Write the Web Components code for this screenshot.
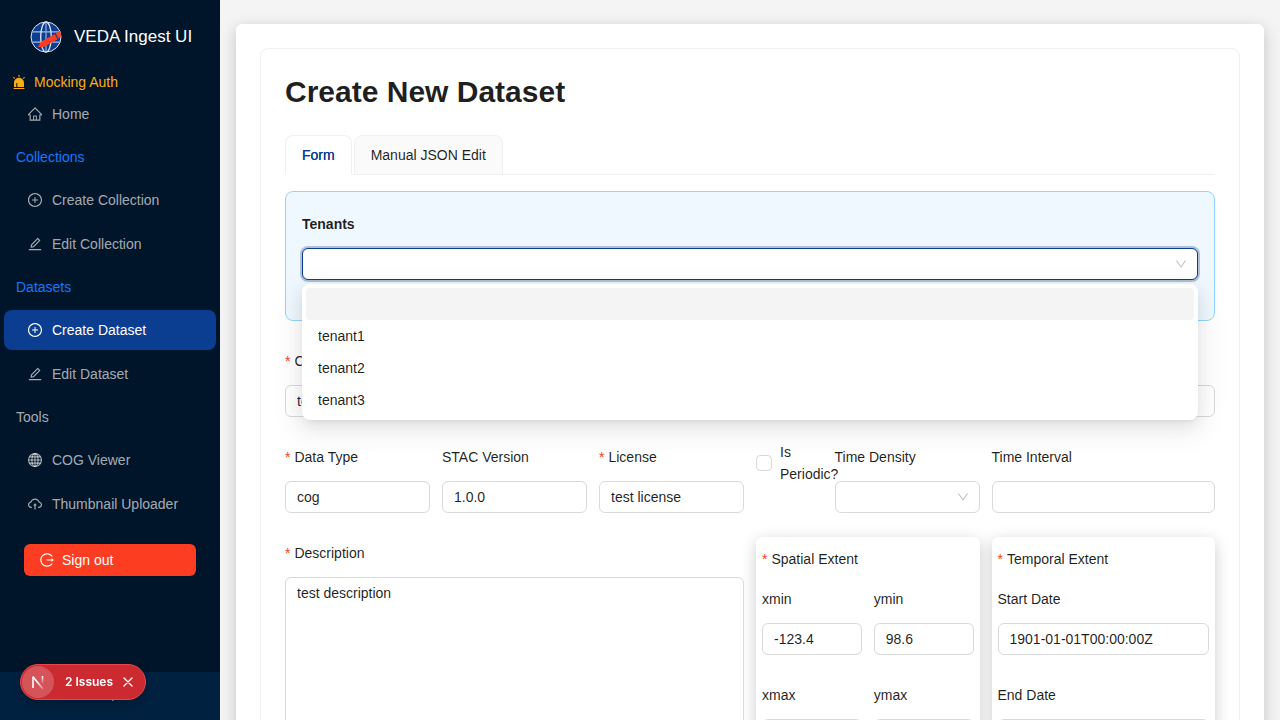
<!DOCTYPE html>
<html lang="en">
<head>
<meta charset="utf-8">
<title>VEDA Ingest UI</title>
<style>
  html { scrollbar-width: none; }
  body { margin: 0; background: #f4f4f4; color: rgba(0, 0, 0, 0.88); font: 14px/22px "Liberation Sans", Arial, sans-serif; }
</style>
</head>
<body>
<veda-app></veda-app>

<script>
const ICONS = {
  home: '<path d="M946.5 505L560.1 118.8l-25.9-25.9a31.5 31.5 0 00-44.4 0L77.5 505a63.9 63.9 0 00-18.8 46c.4 35.2 29.7 63.3 64.9 63.3h42.5V940h691.8V614.3h43.4c17.1 0 33.2-6.7 45.3-18.8a63.6 63.6 0 0018.7-45.3c0-17-6.7-33.1-18.8-45.2zM568 868H456V664h112v204zm217.9-325.7V868H632V640c0-22.1-17.9-40-40-40H432c-22.1 0-40 17.9-40 40v228H238.1V542.3h-96l370-369.7 23.1 23.1L882 542.3h-96.1z"/>',
  plus: '<path d="M696 480H544V328c0-4.400-3.600-8-8-8h-48c-4.400 0-8 3.600-8 8v152H328c-4.400 0-8 3.600-8 8v48c0 4.400 3.600 8 8 8h152v152c0 4.400 3.600 8 8 8h48c4.400 0 8-3.600 8-8V544h152c4.400 0 8-3.600 8-8v-48c0-4.400-3.600-8-8-8z"/><path d="M512 64C264.600 64 64 264.600 64 512s200.600 448 448 448 448-200.600 448-448S759.400 64 512 64zm0 820c-205.400 0-372-166.600-372-372s166.600-372 372-372 372 166.600 372 372-166.600 372-372 372z"/>',
  edit: '<path d="M257.7 752c2 0 4-.2 6-.5L431.9 722c2-.4 3.900-1.300 5.300-2.800l423.900-423.900a9.960 9.960 0 000-14.100L694.900 114.900c-1.900-1.900-4.400-2.900-7.100-2.900s-5.200 1-7.100 2.900L256.800 538.800c-1.500 1.500-2.400 3.300-2.800 5.300l-29.500 168.200a33.500 33.500 0 009.400 29.800c6.600 6.400 14.900 9.900 23.800 9.900zm67.400-174.400L687.800 215l73.300 73.300-362.700 362.600-88.900 15.700 15.600-89zM880 836H144c-17.700 0-32 14.300-32 32v36c0 4.400 3.600 8 8 8h784c4.400 0 8-3.600 8-8v-36c0-17.700-14.300-32-32-32z"/>',
  globe: '<g fill="none" stroke="currentColor" stroke-width="72"><circle cx="512" cy="512" r="412"/><ellipse cx="512" cy="512" rx="200" ry="412"/><path d="M512 100v824M100 512h824M165 310h694M165 714h694"/></g>',
  upload: '<path d="M518.3 459a8 8 0 00-12.600 0l-112 141.700a7.980 7.980 0 006.300 12.900h73.900V856c0 4.400 3.600 8 8 8h60c4.400 0 8-3.600 8-8V613.700H624c6.700 0 10.400-7.700 6.300-12.900L518.300 459z"/><path d="M811.4 366.7C765.6 245.9 648.9 160 512.2 160S258.8 245.8 213 366.6C127.3 389.1 64 467.2 64 560c0 110.5 89.5 200 199.9 200H304c4.4 0 8-3.6 8-8v-60c0-4.400-3.600-8-8-8h-40.100c-33.700 0-65.400-13.400-89-37.700-23.500-24.200-36-56.800-34.900-90.600.9-26.400 9.900-51.200 26.200-72.100 16.700-21.300 40.100-36.800 66.100-43.700l37.900-9.900 13.900-36.600c8.600-22.800 20.600-44.100 35.700-63.400a245.600 245.600 0 0152.400-49.900c41.100-28.900 89.500-44.200 140-44.200s98.900 15.300 140 44.200c19.900 14 37.500 30.800 52.400 49.900 15.100 19.300 27.100 40.700 35.700 63.400l13.800 36.500 37.800 10C846.1 454.5 884 503.8 884 560c0 33.100-12.900 64.300-36.300 87.700a123.070 123.070 0 01-87.600 36.300H720c-4.400 0-8 3.600-8 8v60c0 4.400 3.600 8 8 8h40.100C870.500 760 960 670.500 960 560c0-92.700-63.100-170.700-148.600-193.300z"/>',
  logout: '<path d="M868 732h-70.3c-4.800 0-9.300 2.100-12.300 5.800-7 8.500-14.500 16.700-22.400 24.500a353.840 353.840 0 01-112.700 75.900A352.800 352.800 0 01512.400 866c-47.900 0-94.300-9.400-137.900-27.800a353.840 353.840 0 01-112.700-75.900 353.280 353.280 0 01-76-112.500C167.300 606.200 158 559.900 158 512s9.400-94.200 27.800-137.800c17.800-42.100 43.400-80 76-112.500s70.500-58.100 112.700-75.900c43.600-18.400 90-27.800 137.900-27.800 47.900 0 94.300 9.300 137.900 27.800 42.200 17.800 80.100 43.400 112.700 75.900 7.900 7.900 15.300 16.100 22.400 24.500 3 3.700 7.600 5.800 12.300 5.800H868c6.300 0 10.200-7 6.700-12.300C798 160.500 663.800 81.600 511.300 82 271.700 82.600 79.600 277.100 82 516.400 84.400 751.900 276.200 942 512.400 942c152.100 0 285.700-78.800 362.300-197.700 3.400-5.300-.4-12.300-6.700-12.300zm88.900-226.300L815 393.700c-5.300-4.200-13-.4-13 6.300v76H488c-4.400 0-8 3.600-8 8v56c0 4.400 3.600 8 8 8h314v76c0 6.700 7.800 10.500 13 6.300l141.900-112a8 8 0 000-12.600z"/>',
  down: '<path d="M884 256h-75c-5.100 0-9.900 2.500-12.900 6.600L512 654.200 227.900 262.600c-3-4.100-7.800-6.600-12.900-6.600h-75c-6.500 0-10.300 7.400-6.500 12.700l352.600 486.100c12.800 17.600 39 17.600 51.700 0l352.600-486.100c3.900-5.300.1-12.700-6.400-12.700z"/>',
  left: '<path d="M724 218.300V141c0-6.700-7.700-10.400-12.900-6.300L260.300 486.800a31.860 31.860 0 000 50.300l450.800 352.100c5.300 4.100 12.900.4 12.900-6.300v-77.300c0-4.900-2.300-9.600-6.100-12.600l-360-281 360-281.100c3.800-3 6.100-7.700 6.100-12.600z"/>',
  alert: '<path d="M512 244c176.180 0 319 142.820 319 319v233a32 32 0 01-32 32H225a32 32 0 01-32-32V563c0-176.180 142.820-319 319-319zM484 68h56a8 8 0 018 8v96a8 8 0 01-8 8h-56a8 8 0 01-8-8V76a8 8 0 018-8zM177.250 191.660a8 8 0 0111.320 0l67.880 67.880a8 8 0 010 11.310l-39.600 39.600a8 8 0 01-11.310 0l-67.880-67.880a8 8 0 010-11.310l39.600-39.600zm669.600 0l39.600 39.600a8 8 0 010 11.300l-67.880 67.900a8 8 0 01-11.320 0l-39.600-39.600a8 8 0 010-11.320l67.890-67.880a8 8 0 0111.310 0zM192 892h640a32 32 0 0132 32v24a8 8 0 01-8 8H168a8 8 0 01-8-8v-24a32 32 0 0132-32zm148-317v253h64V575h-64z" fill-rule="evenodd"/>'
};

function define(name, render) {
  customElements.define(name, class extends HTMLElement {
    constructor() { super(); this.attachShadow({ mode: 'open' }); }
    connectedCallback() {
      if (!this.shadowRoot.childNodes.length) {
        this.shadowRoot.innerHTML = '<style>*, *::before, *::after { box-sizing: border-box; }</style>' + render(this);
      }
    }
  });
}

define('veda-icon', el => `
  <style>
    :host { display: inline-flex; flex: none; width: 14px; height: 14px; }
    svg { display: block; width: 100%; height: 100%; }
  </style>
  <svg viewBox="64 64 896 896" fill="currentColor" aria-hidden="true">${ICONS[el.getAttribute('name')]}</svg>`);

define('veda-logo', () => `
  <style>:host { display: block; flex: none; width: 32px; height: 32px; } svg { display: block; }</style>
  <svg width="32" height="32" viewBox="0 0 32 32" role="img" aria-label="VEDA">
    <circle cx="16" cy="16" r="15" fill="#0b3d91"/>
    <g fill="none" stroke="#a9bcdf" stroke-width="1.300">
      <path d="M2.500 10.800h27M2.500 21.200h27"/>
      <ellipse cx="16" cy="16" rx="5.300" ry="15" stroke="#e4ebf6"/>
      <path d="M16 1v30" stroke="#8fa6d2"/>
      <circle cx="16" cy="16" r="15" stroke="#dfe6f2" stroke-width="1"/>
    </g>
    <path d="M8 26l2.600-4.900L24.600 13l3.100 5.200-14 7.900z" fill="#fc3d21"/>
    <path d="M25.700 12.300l4-2.300 1.200 2.800-.3 3.200-2.300 1.400z" fill="#fc3d21"/>
  </svg>`);

define('veda-menu-item', el => `
  <style>
    :host { display: block; margin: 4px; }
    a { display: flex; align-items: center; gap: 10px; height: 40px; padding: 0 24px; border-radius: 8px; color: rgba(255, 255, 255, 0.65); text-decoration: none; white-space: nowrap; }
    :host([selected]) a { background: #0b3d91; color: #fff; }
  </style>
  <a href="#${el.getAttribute('icon')}"><veda-icon name="${el.getAttribute('icon')}"></veda-icon><span><slot></slot></span></a>`);

define('veda-menu-group', () => `
  <style>
    :host { display: block; color: #1677ff; }
    :host([muted]) { color: rgba(255, 255, 255, 0.65); }
    .title { padding: 8px 16px; }
  </style>
  <div class="title"><slot name="title"></slot></div>
  <slot></slot>`);

define('veda-sidebar', () => `
  <style>
    :host { display: flex; flex-direction: column; position: sticky; top: 0; height: 100vh; background: #001529; }
    .brand { display: flex; align-items: center; gap: 12px; height: 74px; padding-left: 30px; color: #fff; font-size: 17px; white-space: nowrap; }
    .mock { display: flex; align-items: center; gap: 8px; padding: 0 12px; line-height: 16px; color: #faad14; }
    nav { display: flow-root; }
    .signout { display: flex; align-items: center; gap: 8px; height: 32px; margin: 16px 24px; padding: 0 16px; border: 0; border-radius: 6px; background: #fc3d21; color: #fff; font: inherit; }
    .collapse { display: flex; align-items: center; justify-content: center; height: 48px; margin-top: auto; padding: 0 0 2px; border: 0; background: #002140; color: #fff; }
  </style>
  <div class="brand"><veda-logo></veda-logo><span>VEDA Ingest UI</span></div>
  <div class="mock"><veda-icon name="alert"></veda-icon><span>Mocking Auth</span></div>
  <nav>
    <veda-menu-item icon="home">Home</veda-menu-item>
    <veda-menu-group><span slot="title">Collections</span>
      <veda-menu-item icon="plus">Create Collection</veda-menu-item>
      <veda-menu-item icon="edit">Edit Collection</veda-menu-item>
    </veda-menu-group>
    <veda-menu-group><span slot="title">Datasets</span>
      <veda-menu-item icon="plus" selected>Create Dataset</veda-menu-item>
      <veda-menu-item icon="edit">Edit Dataset</veda-menu-item>
    </veda-menu-group>
    <veda-menu-group muted><span slot="title">Tools</span>
      <veda-menu-item icon="globe">COG Viewer</veda-menu-item>
      <veda-menu-item icon="upload">Thumbnail Uploader</veda-menu-item>
    </veda-menu-group>
  </nav>
  <button class="signout" type="button"><veda-icon name="logout"></veda-icon>Sign out</button>
  <button class="collapse" type="button" aria-label="Collapse sidebar"><veda-icon name="left"></veda-icon></button>`);

define('veda-issues', () => `
  <style>
    :host { display: flex; align-items: center; box-sizing: border-box; position: fixed; left: 20px; bottom: 20px; height: 36px; padding: 0 11px 0 1px; border: 1px solid #e5484d; border-radius: 18px; background: #ca2a30; color: #fff; box-shadow: 0 4px 8px rgba(0, 0, 0, 0.2); }
    button { display: flex; align-items: center; padding: 0; border: 0; background: none; color: inherit; font: 600 12px/16px Inter, sans-serif; }
    .logo { justify-content: center; width: 32px; height: 32px; border-radius: 50%; background: rgba(255, 255, 255, 0.2); }
    .text { margin: 0 9px 0 11px; }
  </style>
  <button class="logo" type="button" aria-label="Open dev tools">
    <svg width="16" height="16" viewBox="0 0 16 16" fill="none" stroke-width="1.600">
      <defs>
        <linearGradient id="a" x1="8" y1="8" x2="13" y2="15" gradientUnits="userSpaceOnUse"><stop stop-color="#fff"/><stop offset="1" stop-color="#fff" stop-opacity="0.200"/></linearGradient>
        <linearGradient id="b" x1="0" y1="2" x2="0" y2="10" gradientUnits="userSpaceOnUse"><stop stop-color="#fff"/><stop offset="1" stop-color="#fff" stop-opacity="0"/></linearGradient>
      </defs>
      <path d="M3 14V3" stroke="#fff"/><path d="M2.800 2.500L13 15" stroke="url(#a)"/><path d="M12.500 2v9" stroke="url(#b)"/>
    </svg>
  </button>
  <button class="text" type="button">2 Issues</button>
  <button type="button" aria-label="Hide issues">
    <svg width="12" height="12" viewBox="0 0 12 12" fill="none" stroke="currentColor" stroke-width="1.300" stroke-linecap="round"><path d="M2 2l8 8M10 2l-8 8"/></svg>
  </button>`);

define('veda-field', el => {
  const kind = el.getAttribute('kind') || 'input';
  const value = el.getAttribute('value') || '';
  const control = {
    input: `<input id="control" type="text" value="${value}">`,
    textarea: `<textarea id="control" rows="12">${value}</textarea>`,
    select: `<select id="control"><option></option>${(el.getAttribute('options') || '').split(',').map(o => `<option>${o}</option>`).join('')}</select><veda-icon name="down"></veda-icon>`
  }[kind];
  return `
  <style>
    :host { display: block; min-width: 0; margin-bottom: 24px; }
    label { display: flex; align-items: center; height: 32px; margin-bottom: 8px; white-space: nowrap; }
    :host([required]) label::before { content: "*"; margin-right: 4px; color: #fc3d21; font-size: 14px; line-height: 14px; }
    :host([strong]) label { font-weight: 700; }
    .box { position: relative; }
    input, select, textarea { display: block; width: 100%; height: 32px; margin: 0; padding: 4px 11px; border: 1px solid #d9d9d9; border-radius: 6px; outline: none; background: #fff; color: inherit; font: inherit; appearance: none; }
    textarea { height: auto; resize: none; }
    .box veda-icon { position: absolute; top: 10px; right: 11px; width: 12px; height: 12px; color: rgba(0, 0, 0, 0.25); pointer-events: none; }
    :host([active]) select { border-color: #0b3d91; box-shadow: 0 0 0 2px rgba(5, 46, 96, 0.27); }
  </style>
  <label for="control">${el.getAttribute('label')}</label>
  <div class="box">${control}<slot></slot></div>`;
});

define('veda-options', () => `
  <style>
    :host { display: block; position: absolute; z-index: 10; top: 100%; left: 0; right: 0; margin-top: 4px; padding: 4px; border-radius: 8px; background: #fff;
      box-shadow: 0 6px 16px 0 rgba(0, 0, 0, 0.08), 0 3px 6px -4px rgba(0, 0, 0, 0.12), 0 9px 28px 8px rgba(0, 0, 0, 0.05); }
    ul { margin: 0; padding: 0; list-style: none; }
    li { height: 32px; padding: 5px 12px; border-radius: 4px; }
    .hover { background: #f4f4f4; }
  </style>
  <ul role="listbox" aria-label="Tenants">
    <li role="option" class="hover" aria-selected="false"></li>
    <li role="option">tenant1</li>
    <li role="option">tenant2</li>
    <li role="option">tenant3</li>
  </ul>`);

define('veda-checkbox', () => `
  <style>
    :host { display: block; min-width: 0; }
    label { display: flex; align-items: center; }
    input { flex: none; width: 16px; height: 16px; margin: 0 8px 0 0; border: 1px solid #d9d9d9; border-radius: 4px; background: #fff; appearance: none; }
    span { min-width: 0; }
  </style>
  <label><input type="checkbox"><span><slot></slot></span></label>`);

define('veda-extent', el => `
  <style>
    :host { display: block; min-width: 0; padding: 6px; border-radius: 6px; background: #fff; box-shadow: 0 4px 16px rgba(0, 0, 0, 0.2); }
    .title { display: flex; align-items: center; height: 32px; margin-bottom: 8px; }
    .title::before { content: "*"; margin-right: 4px; color: #fc3d21; line-height: 14px; }
    .fields { display: grid; grid-template-columns: 1fr; column-gap: 12px; }
    :host([pairs]) .fields { grid-template-columns: 1fr 1fr; }
  </style>
  <div class="title">${el.getAttribute('heading')}</div>
  <div class="fields"><slot></slot></div>`);

define('veda-tabs', () => `
  <style>
    :host { display: block; margin-bottom: 16px; border-bottom: 1px solid #f0f0f0; }
    div { display: flex; gap: 2px; margin-bottom: -1px; }
    button { height: 40px; padding: 8px 16px; border: 1px solid #f0f0f0; border-radius: 8px 8px 0 0; background: #fafafa; color: inherit; font: inherit; }
    [aria-selected="true"] { border-bottom-color: #fff; background: #fff; color: #0b3d91; text-shadow: 0 0 0.25px currentcolor; }
  </style>
  <div role="tablist">
    <button type="button" role="tab" aria-selected="true">Form</button>
    <button type="button" role="tab" aria-selected="false">Manual JSON Edit</button>
  </div>`);

define('veda-dataset-form', () => `
  <style>
    :host { display: block; }
    .tenants { margin-bottom: 24px; padding: 16px; border: 1px solid #91d5ff; border-radius: 8px; background: #f0f8ff; }
    .grid { display: grid; grid-template-columns: repeat(12, minmax(0, 1fr)); column-gap: 12px; align-items: start; }
    .s1 { grid-column: span 1; }
    .s2 { grid-column: span 2; }
    .s3 { grid-column: span 3; }
    .s6 { grid-column: span 6; }
    .s12 { grid-column: span 12; }
  </style>
  <form>
    <div class="tenants">
      <veda-field kind="select" label="Tenants" options="tenant1,tenant2,tenant3" strong active><veda-options></veda-options></veda-field>
    </div>
    <div class="grid">
      <veda-field class="s12" label="Collection" value="test collection" required></veda-field>
      <veda-field class="s2" label="Data Type" value="cog" required></veda-field>
      <veda-field class="s2" label="STAC Version" value="1.0.0"></veda-field>
      <veda-field class="s2" label="License" value="test license" required></veda-field>
      <veda-checkbox class="s1">Is Periodic?</veda-checkbox>
      <veda-field class="s2" kind="select" label="Time Density" options="month,day,year"></veda-field>
      <veda-field class="s3" label="Time Interval"></veda-field>
      <veda-field class="s6" kind="textarea" label="Description" value="test description" required></veda-field>
      <veda-extent class="s3" heading="Spatial Extent" pairs>
        <veda-field label="xmin" value="-123.4"></veda-field>
        <veda-field label="ymin" value="98.6"></veda-field>
        <veda-field label="xmax"></veda-field>
        <veda-field label="ymax"></veda-field>
      </veda-extent>
      <veda-extent class="s3" heading="Temporal Extent">
        <veda-field label="Start Date" value="1901-01-01T00:00:00Z"></veda-field>
        <veda-field label="End Date"></veda-field>
      </veda-extent>
    </div>
  </form>`);

define('veda-app', () => `
  <style>
    :host { display: grid; grid-template-columns: 220px minmax(0, 1fr); align-items: start; }
    main { margin: 24px 16px; padding: 24px; border-radius: 6px; background: #fff; box-shadow: 0 4px 16px rgba(0, 0, 0, 0.2); }
    .card { padding: 24px; border: 1px solid #f0f0f0; border-radius: 8px; }
    h1 { margin: 0 0 24px; font-size: 30px; line-height: 38px; font-weight: 700; }
    veda-sidebar { z-index: 1; }
    veda-issues { z-index: 2; }
  </style>
  <veda-sidebar></veda-sidebar>
  <main>
    <div class="card">
      <h1>Create New Dataset</h1>
      <veda-tabs></veda-tabs>
      <veda-dataset-form></veda-dataset-form>
    </div>
  </main>
  <veda-issues></veda-issues>`);
</script>
</body>
</html>
